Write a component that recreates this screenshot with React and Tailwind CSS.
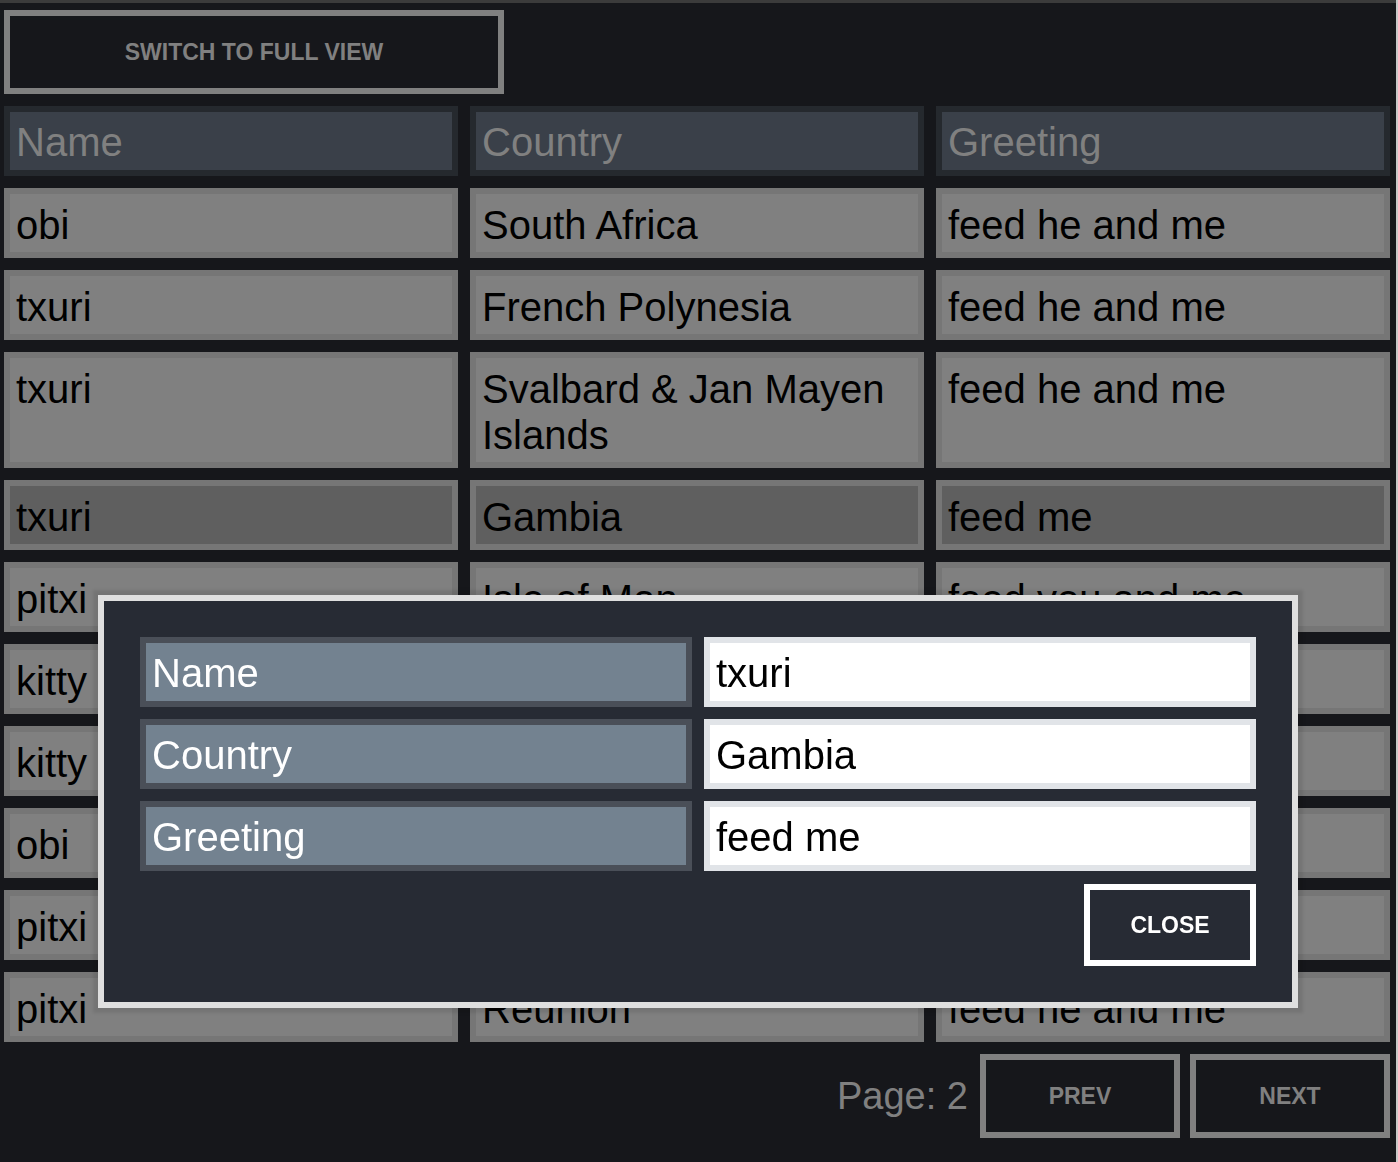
const rows = [
  { name: "obi", country: "South Africa", greeting: "feed he and me" },
  { name: "txuri", country: "French Polynesia", greeting: "feed he and me" },
  { name: "txuri", country: "Svalbard & Jan Mayen Islands", greeting: "feed he and me" },
  { name: "txuri", country: "Gambia", greeting: "feed me", selected: true },
  { name: "pitxi", country: "Isle of Man", greeting: "feed you and me" },
  { name: "kitty", country: "Peru", greeting: "feed me" },
  { name: "kitty", country: "Chile", greeting: "feed he and me" },
  { name: "obi", country: "Nepal", greeting: "feed you" },
  { name: "pitxi", country: "Malta", greeting: "feed me" },
  { name: "pitxi", country: "Reunion", greeting: "feed he and me" },
];

function HeadCell({ children }) {
  return (
    <div className="border-[6px] border-[#25292e] bg-[#3a4049] px-[6px] pt-[7px] pb-[5px] text-[40px] leading-[46px] text-[#808080]">
      {children}
    </div>
  );
}

function Cell({ children, selected }) {
  return (
    <div
      className={`border-[6px] border-[#767676] px-[6px] pt-[8px] pb-[4px] text-[40px] leading-[46px] text-black ${
        selected ? "bg-[#5f5f5f]" : "bg-[#808080]"
      }`}
    >
      {children}
    </div>
  );
}

function GrayButton({ children, className = "" }) {
  return (
    <button
      className={`flex items-center justify-center border-[6px] border-[#808080] bg-[#16171b] text-[23px] font-bold text-[#808080] ${className}`}
    >
      {children}
    </button>
  );
}

function DetailModal({ row }) {
  const fields = [
    ["Name", row.name],
    ["Country", row.country],
    ["Greeting", row.greeting],
  ];

  return (
    <div className="fixed left-[98px] top-[595px] w-[1200px] border-[6px] border-[#dfdfdf] bg-[#272b34] p-[36px] shadow-[0_0_3px_5px_rgba(0,0,0,0.09)]">
      <div className="grid grid-cols-2 gap-[12px]">
        {fields.map(([label, value]) => (
          <div key={label} className="contents">
            <div className="border-[6px] border-[#4a4f58] bg-[#738290] px-[6px] pt-[7px] pb-[5px] text-[40px] leading-[46px] text-white">
              {label}
            </div>
            <div className="border-[6px] border-[#e1e4e8] bg-white px-[6px] pt-[7px] pb-[5px] text-[40px] leading-[46px] text-black">
              {value}
            </div>
          </div>
        ))}
      </div>
      <div className="mt-[13px] flex justify-end">
        <button className="flex h-[82px] w-[172px] items-center justify-center border-[6px] border-white bg-[#272b34] text-[23px] font-bold text-white">
          CLOSE
        </button>
      </div>
    </div>
  );
}

export default function App() {
  const selected = rows.find((r) => r.selected);

  return (
    <div className="min-h-screen border-r-2 border-[#c9c9c9] bg-[#16171b] font-['Liberation_Sans',Arial,sans-serif]">
      <div className="h-[3px] bg-[#3b3b3b]" />
      <div className="w-[1386px] pl-[4px] pt-[7px]">
        <GrayButton className="h-[84px] w-[500px]">SWITCH TO FULL VIEW</GrayButton>

        {/* table */}
        <div className="mt-[12px] grid w-[1386px] grid-cols-3 gap-[12px]">
          <HeadCell>Name</HeadCell>
          <HeadCell>Country</HeadCell>
          <HeadCell>Greeting</HeadCell>
          {rows.map((r, i) => (
            <div key={i} className="contents">
              <Cell selected={r.selected}>{r.name}</Cell>
              <Cell selected={r.selected}>{r.country}</Cell>
              <Cell selected={r.selected}>{r.greeting}</Cell>
            </div>
          ))}
        </div>

        {/* pager */}
        <div className="mt-[12px] flex w-[1386px] items-center justify-end">
          <span className="mr-[12px] text-[38px] text-[#808080]">Page: 2</span>
          <GrayButton className="h-[84px] w-[200px]">PREV</GrayButton>
          <GrayButton className="ml-[10px] h-[84px] w-[200px]">NEXT</GrayButton>
        </div>
      </div>

      <DetailModal row={selected} />
    </div>
  );
}
